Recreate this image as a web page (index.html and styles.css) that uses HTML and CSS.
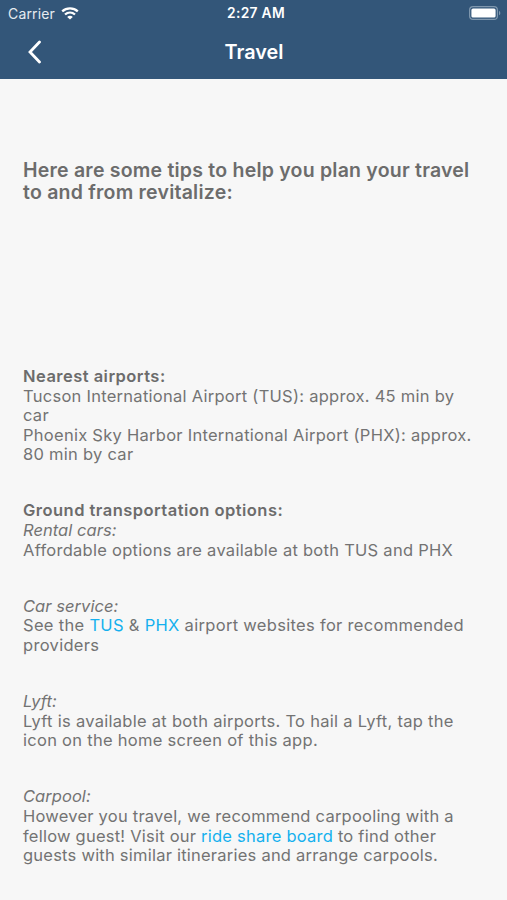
FILE: index.html
```html
<!doctype html>
<html lang="en">

<head>
    <meta charset="UTF-8">
    <meta name="viewport" content="width=device-width, initial-scale=1">
    <title>Travel</title>
    <link rel="stylesheet" href="styles.css">
</head>

<body>
    <header class="header">
        <div class="status">
            <div class="carrier">
                <span>Carrier</span>
                <svg class="wifi" width="18" height="13" viewBox="0 0 18 13">
                    <path d="M1.2 4.4c4.4-4 11.2-4 15.6 0M4 7.5c2.9-2.6 7.1-2.6 10 0" fill="none" stroke="#fff" stroke-width="2.3"/>
                    <path d="M9 12.6L6.2 9.900c1.6-1.4 4-1.4 5.6 0z" fill="#fff"/>
                </svg>
            </div>
            <div class="time">2:27 AM</div>
            <svg class="battery" width="32" height="14" viewBox="0 0 32 14">
                <rect x=".6" y=".6" width="27.8" height="12.8" rx="3.5" fill="none" stroke="#7f97ae" stroke-width="1.2"/>
                <rect x="2.4" y="2.4" width="24.2" height="9.2" rx="1.6" fill="#fff"/>
                <path d="M30 4.7c1.8.8 1.8 3.8 0 4.6z" fill="#7f97ae"/>
            </svg>
        </div>
        <div class="nav">
            <a class="btn_back" href="#" aria-label="Back">
                <svg width="14" height="24" viewBox="0 0 14 24">
                    <path d="M12.500 2L3 12l9.500 10" fill="none" stroke="#fff" stroke-width="2.8" stroke-linecap="round"/>
                </svg>
            </a>
            <h1>Travel</h1>
        </div>
    </header>

    <main class="content">
        <h2>Here are some tips to help you plan your travel<br>to and from revitalize:</h2>

        <section class="airports">
            <h3>Nearest airports:</h3>
            <p>Tucson International Airport (TUS): approx. 45 min by<br>car</p>
            <p>Phoenix Sky Harbor International Airport (PHX): approx.<br>80 min by car</p>
        </section>

        <section class="rental">
            <h3>Ground transportation options:</h3>
            <h4>Rental cars:</h4>
            <p>Affordable options are available at both TUS and PHX</p>
        </section>

        <section class="service">
            <h4>Car service:</h4>
            <p>See the <a href="#">TUS</a> &amp; <a href="#">PHX</a> airport websites for recommended<br>providers</p>
        </section>

        <section class="lyft">
            <h4>Lyft:</h4>
            <p>Lyft is available at both airports. To hail a Lyft, tap the<br>icon on the home screen of this app.</p>
        </section>

        <section class="carpool">
            <h4>Carpool:</h4>
            <p>However you travel, we recommend carpooling with a<br>fellow guest! Visit our <a href="#">ride share board</a> to find other<br>guests with similar itineraries and arrange carpools.</p>
        </section>
    </main>
</body>

</html>
```
FILE: styles.css
```css
* {
    margin: 0;
    padding: 0;
    box-sizing: border-box;
}

body {
    height: 900px;
    overflow: hidden;
    background-color: #f7f7f7;
    color: #737373;
    font-family: Inter, "Liberation Sans", sans-serif;
    font-size: 16.5px;
    line-height: 19.6px;
}

a {
    text-decoration: none;
    color: #14b0ee;
}

.header {
    height: 79px;
    background-color: #335679;
    color: #fff;
}

.status {
    display: grid;
    grid-template-columns: 1fr auto 1fr;
    align-items: center;
    height: 27px;
    padding: 0 6px 0 8px;
    font-size: 14px;
}

.carrier {
    display: flex;
    align-items: center;
    gap: 6px;
    color: #e6ebf0;
    letter-spacing: 0.15px;
}

.wifi {
    margin-bottom: 1px;
}

.time {
    padding: 1px 0 0 3px;
    font-weight: 600;
    font-size: 13.8px;
    letter-spacing: 0.3px;
}

.battery {
    justify-self: end;
    margin-bottom: 1px;
}

.nav {
    display: grid;
    grid-template-columns: 1fr auto 1fr;
    align-items: center;
    height: 50px;
    padding: 0 26px 0 27px;
}

.btn_back {
    height: 24px;
}

.nav h1 {
    padding-top: 2px;
    font-size: 19.8px;
    font-weight: 600;
}

.content {
    padding: 80px 23px 0;
    white-space: nowrap;
    letter-spacing: 0.27px;
}

.content h2 {
    height: 208px;
    color: #6c6c6c;
    font-size: 19.5px;
    font-weight: 600;
    letter-spacing: 0.22px;
    line-height: 22px;
}

.content h3 {
    color: #6c6c6c;
    font-size: 16.5px;
    font-weight: 600;
    letter-spacing: 0.47px;
}

.content h4 {
    font-size: 16.5px;
    font-style: italic;
    font-weight: 400;
    letter-spacing: 0.05px;
}

.content section {
    margin-bottom: 36.5px;
}

.service p {
    letter-spacing: 0.31px;
}

.lyft p {
    letter-spacing: 0.28px;
}

.carpool p {
    letter-spacing: 0.23px;
}
```
